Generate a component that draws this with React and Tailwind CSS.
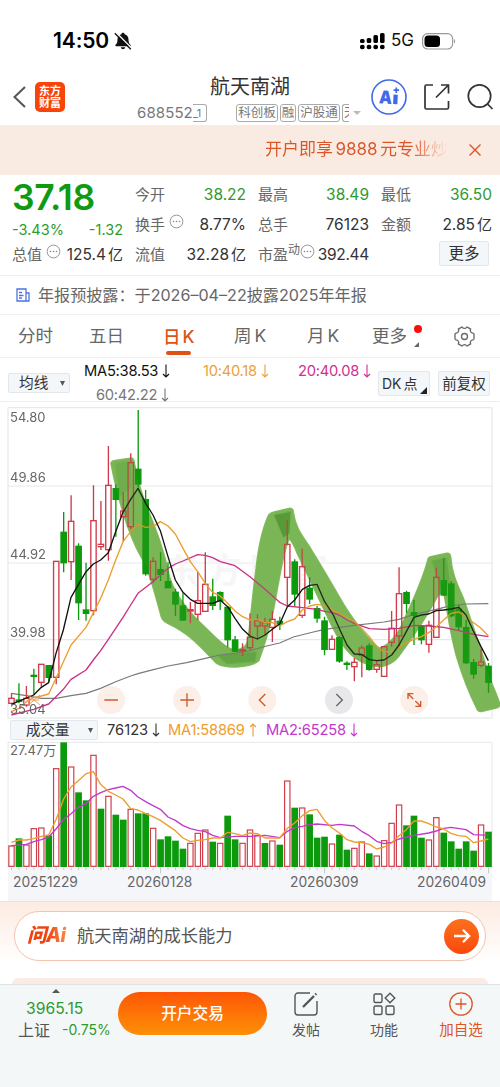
import React from 'react';

// Candles: [direction, high, body top, body bottom, low], in chart units (3 per pixel)
const candles = [
  ['r', 880, 895, 910, 912], ['g', 850, 900, 904, 910], ['r', 858, 895, 915, 920], ['g', 806, 826, 829, 885],
  ['r', 793, 793, 847, 860], ['g', 795, 797, 832, 845], ['r', 484, 484, 832, 853], ['g', 336, 397, 488, 517],
  ['r', 286, 364, 485, 540], ['g', 430, 439, 608, 660], ['g', 488, 630, 640, 662], ['r', 256, 362, 632, 646],
  ['r', 303, 433, 440, 450], ['r', 138, 256, 449, 482], ['g', 253, 266, 298, 410], ['r', 277, 333, 350, 425],
  ['r', 160, 188, 380, 388], ['g', 30, 208, 252, 262], ['g', 270, 299, 521, 527], ['r', 472, 484, 538, 550],
  ['g', 457, 509, 523, 543], ['g', 487, 545, 563, 563], ['g', 566, 577, 612, 648], ['g', 580, 618, 660, 662],
  ['r', 606, 629, 633, 670], ['r', 515, 602, 643, 660], ['r', 457, 553, 634, 634], ['g', 536, 591, 616, 630],
  ['g', 574, 578, 603, 630], ['g', 618, 622, 719, 742], ['g', 708, 720, 754, 757], ['r', 730, 749, 753, 768],
  ['r', 640, 712, 743, 750], ['r', 643, 662, 678, 718], ['r', 653, 668, 678, 706], ['r', 633, 658, 682, 726],
  ['g', 650, 664, 672, 690], ['r', 360, 433, 532, 618], ['g', 478, 486, 582, 618], ['r', 446, 500, 646, 654],
  ['g', 532, 565, 597, 612], ['g', 618, 626, 654, 668], ['g', 650, 663, 748, 766], ['r', 706, 718, 748, 750],
  ['g', 708, 713, 783, 788], ['g', 784, 790, 793, 810], ['r', 774, 787, 800, 844], ['r', 736, 744, 766, 832],
  ['g', 730, 738, 808, 812], ['r', 784, 794, 808, 818], ['r', 738, 740, 829, 830], ['r', 633, 685, 727, 740],
  ['r', 502, 581, 708, 745], ['g', 572, 578, 610, 640], ['g', 600, 638, 646, 735], ['g', 678, 680, 719, 733],
  ['r', 662, 676, 733, 758], ['r', 503, 532, 712, 712], ['g', 474, 542, 585, 588], ['g', 543, 552, 647, 652],
  ['g', 615, 628, 680, 690], ['g', 660, 683, 788, 792], ['g', 777, 788, 822, 836], ['r', 747, 786, 796, 802],
  ['g', 789, 799, 847, 878],
];

const volumes =
  'r409 g387 r406 r357 r355 g378 r177 g99 r172 g249 g273 r137 g298 r260 g316 g331 r299 g312 g312 r356 g390 g381 g394 g418 r401 r371 r361 g397 r401 g319 g390 r401 r361 r377 g401 r394 g406 r214 g295 r295 g315 g385 g382 r403 g376 g421 r416 r397 g432 r439 r393 r341 r286 g348 g319 g385 r391 r324 g370 g396 g418 g396 g424 r346 g367'.split(
    ' '
  );

const ma5 =
  '34,913 101,885 124,862 146,848 168,760 190,690 213,592 258,515 280,492 302,480 325,458 347,395 369,337 392,298 414,265 437,310 459,345 481,392 504,470 526,540 549,577 571,598 593,610 638,610 661,601 683,620 705,655 728,688 750,708 772,717 795,705 817,688 839,672 862,620 884,600 907,568 929,556 951,553 974,605 1000,645 1020,690 1041,735 1063,762 1085,763 1108,779 1130,782 1152,780 1175,765 1197,735 1219,695 1242,652 1264,645 1286,642 1309,632 1331,630 1353,627 1376,622 1398,645 1421,695 1443,740 1465,782';
const ma10 =
  '34,935 57,925 79,905 101,893 124,888 146,882 168,835 213,735 258,682 302,595 325,540 347,480 369,425 392,395 414,373 437,382 459,380 481,365 504,378 526,402 549,445 571,485 593,515 616,550 638,577 661,588 683,610 705,633 728,650 750,660 772,658 795,668 817,668 839,678 862,665 884,657 907,630 929,618 951,613 974,617 996,628 1018,640 1041,652 1063,665 1085,685 1108,710 1130,740 1152,755 1175,755 1197,742 1219,728 1242,718 1264,710 1286,698 1309,680 1331,660 1353,640 1376,636 1398,650 1421,668 1443,685 1465,708';
const ma20 =
  '34,945 101,928 146,912 168,890 190,868 213,838 258,810 280,780 302,752 325,718 347,685 369,652 392,615 414,580 459,545 504,505 526,492 549,483 593,464 616,466 638,473 661,485 705,497 750,530 795,568 839,607 862,618 907,623 951,628 974,634 996,638 1018,645 1041,660 1063,670 1108,686 1152,688 1197,685 1242,676 1286,678 1331,682 1376,692 1421,703 1465,710';
const ma60 =
  '34,880 79,887 124,895 168,895 213,887 258,880 302,865 347,845 392,828 414,821 460,809 504,798 560,788 616,775 660,765 705,760 750,752 800,738 839,729 880,711 940,696 974,688 1063,676 1152,666 1197,658 1242,643 1309,628 1353,617 1398,612 1465,611';
const volMa1 =
  '34,398 57,391 79,391 101,387 124,380 146,376 168,330 190,270 213,232 235,213 258,192 280,186 302,224 325,245 347,256 369,268 392,297 414,301 437,312 459,321 481,332 504,348 526,363 549,385 571,396 593,392 616,390 638,385 661,385 683,368 705,372 728,378 750,370 772,372 795,385 839,385 862,356 884,340 907,318 929,303 951,299 974,333 996,354 1018,370 1041,390 1063,397 1085,399 1108,404 1130,418 1152,412 1175,400 1197,378 1219,360 1242,334 1264,334 1286,342 1309,352 1331,358 1353,371 1376,378 1398,380 1421,399 1443,394 1465,388';
const volMa2 =
  '34,408 79,404 101,396 124,390 146,382 168,358 190,330 213,312 235,293 258,282 280,260 302,249 325,240 347,235 369,230 392,242 414,262 437,276 459,288 481,299 504,322 526,332 549,348 571,357 593,362 616,366 638,377 661,384 705,380 750,380 795,377 839,384 862,365 884,354 907,350 929,345 951,343 996,347 1018,344 1063,349 1085,365 1108,378 1130,395 1152,402 1175,398 1197,388 1242,377 1286,370 1309,364 1331,356 1353,353 1398,360 1421,375 1465,377';

// Outline of the highlighter mark that follows the swings
const marker =
  'M333 190Q335 183 345 182L395 174Q402 176 403 190C412 240 428 290 442 325C468 390 492 450 508 530C525 585 570 640 615 682C650 715 680 750 708 750Q738 746 744 722C752 660 757 590 768 510C775 440 790 380 806 345Q812 338 822 336L870 325Q880 326 880 338C885 380 905 405 925 435C965 500 1000 560 1030 612C1060 660 1100 715 1138 745C1165 738 1195 705 1212 660C1240 600 1268 540 1283 482Q1284 472 1295 470L1340 460Q1351 458 1352 472C1354 520 1375 560 1392 600C1414 665 1444 750 1463 815C1477 860 1490 880 1499 912Q1500 921 1488 924L1445 934Q1434 935 1431 926C1408 880 1388 830 1370 770C1353 710 1343 640 1333 585Q1322 572 1312 590C1280 650 1240 710 1195 770C1170 800 1135 806 1100 792C1050 775 1022 730 997 680C962 610 922 520 892 460Q880 430 868 415C848 455 838 540 820 630C805 700 790 745 776 782C755 802 680 808 650 790C610 752 590 720 540 690C515 672 490 670 484 650C468 590 452 530 435 490C390 420 355 300 333 190Z';

const xAt = (i) => 34.5 + i * 22.36;
const GREEN = '#0c9a0c';
const RED = '#cf3b48';

function Arrow({ up }) {
  return (
    <svg className="inline-block align-[-2px] ml-[4px] w-[8px] h-[14px]" viewBox="0 0 8 14" fill="none" stroke="currentColor" strokeWidth="1.1">
      <path d={up ? 'M4 13.500V1M1 4l3-3 3 3' : 'M4 .5V13M1 10l3 3 3-3'} />
    </svg>
  );
}

function StatusBar() {
  return (
    <div className="h-[75px] flex items-center justify-between pl-[53px] pr-[44px] pt-[7px]">
      <div className="flex items-center gap-[5px]">
        <span className="text-[21px] font-semibold tracking-[-0.1px] text-black">14:50</span>
        <svg className="w-[18px] h-[18px]" viewBox="0 0 18 18">
          <path d="M9 .8c1 0 1.500.6 1.600 1.400 2.700.7 3.900 2.800 3.900 5.300 0 3.200.8 4.200 1.900 5.300.6.7.3 1.500-.6 1.500H2.200c-.9 0-1.200-.8-.6-1.500 1.100-1.100 1.900-2.100 1.900-5.300 0-2.500 1.200-4.600 3.900-5.300C7.500 1.400 8 .8 9 .8zM6.800 15.200h4.400c-.2 1.300-1.100 2-2.200 2s-2-.7-2.200-2z" fill="#111" />
          <path d="m2 .5 16 16" stroke="#fff" strokeWidth="1.500" />
          <path d="m.8 1.200 16 16" stroke="#111" strokeWidth="1.300" />
        </svg>
      </div>
      <div className="flex items-center">
        <svg className="w-[26px] h-[18px]" viewBox="0 0 26 18">
          {[[0, 7], [6.7, 6], [13.4, 3], [20, 1]].map(([x, y]) => (
            <g key={x} fill="#000">
              <rect x={x} y={y} width="4.6" height={11 - y} rx="1.6" />
              <rect x={x} y="12.8" width="4.6" height="4.4" rx="2" />
            </g>
          ))}
        </svg>
        <span className="ml-[5px] text-[17px] text-[#111]">5G</span>
        <svg className="ml-2 w-[34px] h-[17px]" viewBox="0 0 34 17">
          <rect x="0.6" y="0.6" width="30" height="15.4" rx="5" fill="none" stroke="#999" strokeWidth="1.2" />
          <rect x="2.5" y="2.5" width="15.5" height="11.6" rx="3.5" fill="#000" />
          <path d="M32 6v4.5c1.6-.8 1.6-3.7 0-4.5z" fill="#999" />
        </svg>
      </div>
    </div>
  );
}

function Header() {
  return (
    <div className="h-[50px] flex">
      <div className="w-[137px] pl-[13px] flex items-center gap-[9px] pb-[6px]">
        <svg className="w-[13px] h-[22px]" viewBox="0 0 13 22" fill="none" stroke="#555" strokeWidth="2">
          <path d="M12 1 1.500 11 12 21" />
        </svg>
        <div className="w-[30px] h-[30px] rounded-[5px] bg-[#f9430b] text-white text-[11px] leading-[12px] font-bold text-center pt-[3px]">
          东方<br />财富
        </div>
      </div>
      <div className="w-[226px]">
        <div className="h-[26px] pl-[73px] leading-[25px] text-[20px] text-[#333] whitespace-nowrap">航天南湖</div>
        <div className="h-[24px] flex items-center text-[#777] whitespace-nowrap">
          <span className="w-[56px] text-[15px] tracking-[0.1px]">688552</span>
          <span className="w-[14px] h-[18px] rounded-r-[3px] border border-l-0 border-[#aaa] text-[11px] leading-[17px]">_1</span>
          <div className="ml-[29px] flex gap-[2px] text-[12.500px]">
            <span className="h-[18px] w-[42px] rounded-[3px] border border-[#aaa] text-center leading-[16px]">科创板</span>
            <span className="h-[18px] w-[16px] rounded-[3px] border border-[#aaa] leading-[16px] flex justify-center">融</span>
            <span className="h-[18px] w-[42px] rounded-[3px] border border-[#aaa] text-center leading-[16px]">沪股通</span>
            <span className="h-[18px] w-[7px] rounded-l-[3px] border border-r-0 border-[#aaa] leading-[16px] pl-px overflow-hidden">天</span>
          </div>
          <span className="ml-[4px] border-x-[4px] border-x-transparent border-t-[4px] border-t-[#bbb]" />
        </div>
      </div>
      <div className="flex items-center pl-[8px] gap-[17px] pb-[6px]">
        <svg className="w-[36px] h-[36px]" viewBox="0 0 36 36">
          <circle cx="18" cy="18" r="17" fill="none" stroke="#4169e8" strokeWidth="1.600" />
          <text x="8" y="24.500" fontSize="18" fontWeight="900" fill="#4169e8" textLength="13" lengthAdjust="spacingAndGlyphs" transform="rotate(3 14 18)">A</text>
          <path d="m22.500 15.500 4.300.2-.4 9.600-4.300-.2z" fill="#4169e8" />
          <path d="M25.300 8.500v5.400M22.600 11.200H28" stroke="#4169e8" strokeWidth="1.700" />
        </svg>
        <svg className="w-[26px] h-[26px]" viewBox="0 0 26 26" fill="none" stroke="#333" strokeWidth="1.700">
          <path d="M9 1H2.500Q1 1 1 2.500V23.500Q1 25 2.500 25H23Q24.500 25 24.500 23.500V17M17 1h7.500v8.500M24 1.500 12 13.500" />
        </svg>
        <svg className="w-[28px] h-[28px]" viewBox="0 0 28 28" fill="none" stroke="#333" strokeWidth="1.700">
          <circle cx="12.500" cy="13" r="11.200" />
          <path d="m20.500 21 5 5" />
        </svg>
      </div>
    </div>
  );
}

function Dots() {
  return (
    <svg className="w-[15px] h-[15px] shrink-0" viewBox="0 0 15 15">
      <circle cx="7.500" cy="7.500" r="6.400" fill="none" stroke="#999" strokeWidth="1" />
      <g fill="#888">
        <circle cx="4.500" cy="7.500" r="0.800" />
        <circle cx="7.500" cy="7.500" r="0.800" />
        <circle cx="10.500" cy="7.500" r="0.800" />
      </g>
    </svg>
  );
}

function Stat({ label, value, unit, green, sup, dots }) {
  return (
    <div className="h-[30px] flex items-center whitespace-nowrap text-[15px] text-[#666]">
      <span>{label}</span>
      {sup && <span className="text-[12px] -mt-[10px]">{sup}</span>}
      {dots && <span className={sup ? '-mt-[8px]' : 'ml-1 -mt-[8px]'}><Dots /></span>}
      <span className={`ml-auto text-[15.500px] ${sup ? 'tracking-[-0.3px]' : ''} ${green ? 'text-[#2f9a2f]' : 'text-[#333]'}`}>
        {value}
        {unit && <span className="ml-[2px] text-[15px]">{unit}</span>}
      </span>
    </div>
  );
}

function Quote() {
  return (
    <div className="h-[101px] border-b border-[#eee] pl-3 pr-2 pt-[5px] grid grid-cols-4 gap-x-3">
      <div>
        <div className="h-[37px] text-[35.500px] leading-[35px] font-semibold tracking-[-0.3px] text-[#0f9a12]">37.18</div>
        <div className="h-[23px] flex items-center justify-between text-[14.500px] text-[#2f9a2f] pt-[2px]">
          <span>-3.43%</span>
          <span>-1.32</span>
        </div>
        <Stat label="总值" value="125.4" unit="亿" dots />
      </div>
      <div>
        <Stat label="今开" value="38.22" green />
        <Stat label="换手" value="8.77%" dots />
        <Stat label="流值" value="32.28" unit="亿" />
      </div>
      <div>
        <Stat label="最高" value="38.49" green />
        <Stat label="总手" value="76123" />
        <Stat label="市盈" value="392.44" sup="动" dots />
      </div>
      <div>
        <Stat label="最低" value="36.50" green />
        <Stat label="金额" value="2.85" unit="亿" />
        <div className="ml-[58px] mt-[1px] w-[50px] h-[25px] rounded-[2px] border border-[#e3e6ea] bg-[#f4f7f9] text-center text-[15.500px] leading-[24px] text-[#333]">更多</div>
      </div>
    </div>
  );
}

function Tabs() {
  return (
    <div className="h-[43px] border-b border-[#f0f0f0] flex items-center text-[17.500px] text-[#666] pl-[18px] whitespace-nowrap">
      <span className="w-[71px]">分时</span>
      <span className="w-[74px]">五日</span>
      <span className="w-[71px] h-full flex flex-col text-[#dd5316]">
        <span className="leading-[43px] h-[36px] font-medium">日<span className="ml-[2px]">K</span></span>
        <span className="ml-[3px] w-[25px] h-[3.500px] rounded-full bg-[#dd5316]" />
      </span>
      <span className="w-[73px]">周<span className="ml-[3px]">K</span></span>
      <span className="w-[65px]">月<span className="ml-[3px]">K</span></span>
      <span>更多</span>
      <span className="w-[12px] h-full ml-[7px] flex flex-col">
        <span className="mt-[10px] w-[8px] h-[8px] rounded-full bg-[#fb0d0d]" />
        <svg className="mt-[9px] w-[5px] h-[5px]" viewBox="0 0 5 5"><path d="M5 0v5H0z" fill="#666" /></svg>
      </span>
      <svg className="ml-[28px] w-[21px] h-[21px]" viewBox="0 0 21 21" fill="none" stroke="#666" strokeWidth="1.300">
        <path d="M7.600 1.200h.8c.8 1.600 3.400 1.600 4.200 0h.8l3.200 1.900c-.9 1.900.3 3.800 2.400 4 .7 0 .8.300 1 1v4.800c-.2.700-.3 1-1 1-2.100.200-3.300 2.100-2.400 4l-3.200 1.900h-.8c-.8-1.600-3.400-1.600-4.200 0h-.8l-3.200-1.900c.9-1.900-.3-3.800-2.400-4-.7 0-.8-.3-1-1V8.100c.2-.7.3-1 1-1 2.100-.2 3.300-2.100 2.400-4z" />
        <circle cx="10.500" cy="10.500" r="3" />
      </svg>
    </div>
  );
}

function Legend() {
  return (
    <div className="h-[44px] border-b border-[#eee] flex pl-2 text-[14.700px] whitespace-nowrap">
      <div className="mt-[15px] w-[62px] h-[20px] rounded-[2px] border border-[#e3e6ea] bg-[#f4f7f9] flex items-center pl-[10px] pr-[4px] justify-between text-[#333]">
        均线
        <svg className="w-[5px] h-[5px]" viewBox="0 0 5 5"><path d="M0 0h5L2.500 5z" fill="#555" /></svg>
      </div>
      <div className="ml-[14px] w-[294px] tracking-[-0.25px]">
        <div className="h-[27px] leading-[27px] flex">
          <span className="w-[119px] text-[#111]">MA5:38.53<Arrow /></span>
          <span className="w-[95px] text-[#eaa23a]">10:40.18<Arrow /></span>
          <span className="text-[#d2308f]">20:40.08<Arrow /></span>
        </div>
        <div className="pl-[12px] leading-[20px] text-[#777]">60:42.22<Arrow /></div>
      </div>
      <div className="mt-[13px] w-[52px] h-[25px] rounded-[2px] border border-[#e3e6ea] bg-[#f4f7f9] flex items-center pl-[3px] text-[14px] text-[#333]">
        DK<span className="ml-[2px]">点</span>
        <svg className="ml-[2px] mt-[13px] w-[7px] h-[7px]" viewBox="0 0 7 7"><path d="M7 0v7H0z" fill="#222" /></svg>
      </div>
      <div className="ml-[8px] mt-[13px] w-[52px] h-[25px] rounded-[2px] border border-[#e3e6ea] bg-[#f4f7f9] text-center leading-[23px] text-[14.500px] text-[#333]">前复权</div>
    </div>
  );
}

function PriceChart() {
  return (
    <div className="relative h-[316px] pt-[5px]">
      <svg className="w-[500px] h-[311px] overflow-visible" viewBox="0 21 1500 933">
        <g fill="none" stroke="#e6e8eb" strokeWidth="3.500">
          <rect x="24" y="23" width="1452" height="931" />
          <path d="M24 258H1476M24 489H1476M24 719H1476" />
        </g>
        <text x="490" y="548" fontSize="104" fontWeight="700" fill="#f6f6f6" letterSpacing="26">东方财富</text>
        <path className="blur-[1.500px]" d={marker} fill="#85bd60" stroke="#85bd60" strokeWidth="5" />
        <g className="blur-[2px]" fill="#4b9330">
          <path d="M822 345L872 335L868 400L850 412Z" opacity="0.800" />
          <path d="M1295 482L1340 472L1350 550L1320 560Z" opacity="0.400" />
          <path d="M345 190L392 182L395 260L360 290Z" opacity="0.250" />
          <path d="M650 765L770 755L765 785L680 792Z" opacity="0.500" />
        </g>
        <polyline points={ma60} fill="none" stroke="#7a7a7a" strokeWidth="3.500" />
        {candles.map(([dir, high, top, bottom, low], i) => {
          const x = xAt(i);
          const color = dir === 'r' ? RED : GREEN;
          return (
            <g key={i} stroke={color} strokeWidth="4">
              <path d={`M${x} ${high}V${top}M${x} ${bottom}V${low}`} />
              <rect x={x - 8} y={top} width="16" height={bottom - top} fill={dir === 'r' ? 'none' : color} />
            </g>
          );
        })}
        <g fill="none" strokeWidth="4" strokeLinejoin="round">
          <polyline points={ma20} stroke="#cc2f86" />
          <polyline points={ma10} stroke="#ee9c2c" />
          <polyline points={ma5} stroke="#111" />
        </g>
        {/* Second, thin coat of the marker so the lines under it look tinted */}
        <path d={marker} fill="#559a30" opacity="0.200" />

        <g>
          {[333, 561, 787, 1243].map((cx) => (
            <circle key={cx} cx={cx} cy="900" r="42" fill="#fcefe7" />
          ))}
          <circle cx="1017" cy="900" r="42" fill="#e8e8ea" />
        </g>
        <g fill="none" stroke="#cf5a2e" strokeWidth="4">
          <path d="M313 900H354M541 900H582M561 880V920M796 882L778 900L796 918" />
          <path d="M1224 897V881H1240M1224 881L1240 897M1246 903L1262 919M1262 903V919H1246" />
          <path d="M1009 882L1027 900L1009 918" stroke="#666" />
        </g>
        <g fill="none" stroke="#ee9b55" strokeWidth="3">
          <path d="M85 885L120 915M85 915L120 885M90 900H118" />
        </g>
      </svg>
      <span className="absolute left-[10px] top-[7px] text-[13px] leading-[16px] text-[#666]">54.80</span>
      <span className="absolute left-[10px] top-[67px] text-[13px] leading-[16px] text-[#666]">49.86</span>
      <span className="absolute left-[10px] top-[144px] text-[13px] leading-[16px] text-[#666]">44.92</span>
      <span className="absolute left-[10px] top-[222px] text-[13px] leading-[16px] text-[#666]">39.98</span>
      <span className="absolute left-[10px] top-[299px] text-[13px] leading-[16px] text-[#666]">35.04</span>
    </div>
  );
}

function VolumeChart() {
  return (
    <div>
      <div className="h-[24px] flex items-center pl-[10px] text-[14.700px] whitespace-nowrap">
        <div className="w-[88px] h-[20px] rounded-[2px] border border-[#e3e6ea] bg-[#f4f7f9] flex items-center pl-[15px] pr-[4px] justify-between text-[14.500px] text-[#333]">
          成交量
          <svg className="w-[5px] h-[5px]" viewBox="0 0 5 5"><path d="M0 0h5L2.500 5z" fill="#555" /></svg>
        </div>
        <span className="ml-[9px] w-[61px] text-[#333]">76123<Arrow /></span>
        <span className="w-[98px] tracking-[-0.2px] text-[#ee9c2c]">MA1:58869<Arrow up /></span>
        <span className="tracking-[-0.2px] text-[#c338cc]">MA2:65258<Arrow /></span>
      </div>
      <div className="relative h-[125px]">
        <svg className="w-[500px] h-[125px] overflow-visible" viewBox="0 97 1500 375">
          <path d="M24 472V98H1476V472" fill="none" stroke="#e6e8eb" strokeWidth="3" />
          {volumes.map((v, i) => {
            const top = Number(v.slice(1));
            return v[0] === 'r' ? (
              <rect key={i} x={xAt(i) - 8} y={top} width="16" height={470 - top} fill="#fff" stroke={RED} strokeWidth="3.500" />
            ) : (
              <rect key={i} x={xAt(i) - 10} y={top - 1} width="20" height={473 - top} fill={GREEN} />
            );
          })}
          <g fill="none" strokeWidth="4" strokeLinejoin="round">
            <polyline points={volMa2} stroke="#c338cc" />
            <polyline points={volMa1} stroke="#ee9c2c" />
          </g>
        </svg>
        <span className="absolute left-[10px] top-0 text-[13px] leading-[16px] text-[#666]">27.47万</span>
      </div>
      <div className="mx-2 h-[34px] bg-[#f5f6fa] flex flex-col">
        <svg className="w-[484px] h-[7px]" viewBox="24 0 1452 21">
          {volumes.map((_, i) => (
            <path key={i} d={`M${xAt(i)} 2V${[20, 42, 64].includes(i) ? 19 : 9}`} stroke="#b9bdc6" strokeWidth="2.500" />
          ))}
        </svg>
        <div className="flex text-[13.800px] leading-[17px] text-[#666] pl-[5px]">
          <span className="w-[114px]">20251229</span>
          <span className="w-[163px]">20260128</span>
          <span className="w-[127px]">20260309</span>
          <span>20260409</span>
        </div>
      </div>
    </div>
  );
}

function AskBar() {
  return (
    <div className="h-[83px] border-t border-[#f3dfd6] bg-linear-to-b from-[#fcebe2] to-white to-75% px-[14px] pt-[9px] flex flex-col">
      <div className="h-[50px] rounded-full border border-[#f4c3ae] bg-white flex items-center pl-[12px] pr-[6px]">
        <span className="w-[41px] pr-1 text-[19.500px] font-extrabold italic tracking-[-0.5px] bg-linear-to-r from-[#f0420c] from-50% to-[#ff8a4a] bg-clip-text text-transparent whitespace-nowrap">问Ai</span>
        <span className="ml-[9px] text-[17.300px] text-[#555]">航天南湖的成长能力</span>
        <span className="ml-auto w-[35px] h-[35px] rounded-full bg-linear-to-b from-[#fb701c] to-[#f9480b] flex items-center justify-center">
          <svg className="w-[18px] h-[16px]" viewBox="0 0 20 18" fill="none" stroke="#fff" strokeWidth="2.600">
            <path d="M1 9h17M11 2l7 7-7 7" />
          </svg>
        </span>
      </div>
      <div className="mt-[17px] h-[6px] -mx-[2px] rounded-t-[10px] bg-[#fcebe2]" />
    </div>
  );
}

function BottomBar() {
  return (
    <div className="h-[103px] border-t border-[#dfe3e6] bg-[#f4f7f8] flex text-[14px]">
      <div className="w-[118px] pt-[4px]">
        <svg className="ml-[52px] w-[8px] h-[4px]" viewBox="0 0 8 4"><path d="M0 4 4 0l4 4z" fill="#555" /></svg>
        <div className="mt-[6px] ml-[26px] text-[15.700px] leading-[20px] text-[#2f9a2f]">3965.15</div>
        <div className="pl-[18px] flex items-center leading-[22px] whitespace-nowrap">
          <span className="text-[16px] text-[#555]">上证</span>
          <span className="ml-[12px] text-[14px] text-[#2f9a2f]">-0.75%</span>
        </div>
      </div>
      <div className="mt-[7px] w-[149px] h-[43px] rounded-full bg-linear-to-b from-[#fd5406] to-[#fd8f06] text-center text-[15.700px] leading-[43px] font-medium text-white">
        开户交易
      </div>
      <div className="ml-[24px] w-[30px] pt-[7px] flex flex-col items-center text-[#555] whitespace-nowrap">
        <svg className="w-[24px] h-[24px]" viewBox="0 0 24 24" fill="none" stroke="#555" strokeWidth="1.400">
          <path d="M16 1H4a3 3 0 0 0-3 3v16a3 3 0 0 0 3 3h16a3 3 0 0 0 3-3V9" />
          <path d="M9 15 20 4M21.300 2.700l1-1" strokeWidth="2.400" />
        </svg>
        <span className="mt-[3px]">发帖</span>
      </div>
      <div className="ml-[48px] w-[30px] pt-[7px] flex flex-col items-center text-[#555] whitespace-nowrap">
        <svg className="w-[24px] h-[24px]" viewBox="0 0 24 24" fill="none" stroke="#555" strokeWidth="1.400">
          <rect x="2" y="2" width="8" height="8.500" rx="1.500" />
          <rect x="2" y="14" width="8" height="8.500" rx="1.500" />
          <rect x="14" y="14" width="8" height="8.500" rx="1.500" />
          <path d="m18 1.200 4.800 4.800-4.800 4.800L13.200 6z" />
        </svg>
        <span className="mt-[3px]">功能</span>
      </div>
      <div className="ml-[40px] w-[44px] pt-[7px] flex flex-col items-center text-[14.500px] text-[#dc5528] whitespace-nowrap">
        <svg className="w-[24px] h-[24px]" viewBox="0 0 24 24" fill="none" stroke="#dc5528" strokeWidth="1.300">
          <circle cx="12" cy="12" r="11.200" />
          <path d="M6.500 12h11M12 6.500v11" />
        </svg>
        <span className="mt-[3px]">加自选</span>
      </div>
    </div>
  );
}

export default function App() {
  return (
    <div className="w-[500px] h-[1087px] overflow-hidden bg-white font-['Inter','Noto_Sans_CJK_SC',sans-serif]">
      <StatusBar />
      <Header />
      <div className="h-[50px] bg-[#f9ebe2] flex items-center pl-[265px] text-[#dc5528]">
        <div className="w-[183px] whitespace-nowrap text-[17px] bg-linear-to-r from-[#dc5528] from-80% to-[#f9ebe2] bg-clip-text text-transparent">
          开户即享<span className="mx-[2.500px]">9888</span>元专业炒
        </div>
        <svg className="ml-[21px] w-[12px] h-[12px]" viewBox="0 0 12 12" stroke="#dc5528" strokeWidth="1.400">
          <path d="m.5.5 11 11M11.500.5l-11 11" />
        </svg>
      </div>
      <Quote />
      <div className="h-[39px] border-b border-[#f0f0f0] flex items-center pl-[16px] text-[#666] whitespace-nowrap">
        <svg className="w-[14px] h-[14px]" viewBox="0 0 14 14" fill="none" stroke="#4b74e0" strokeWidth="1.300">
          <path d="M1 1h9v12H1zM10 5h3v8h-3M3 4.500h3M3 7.500h4.500M3 10h3" />
        </svg>
        <span className="ml-[8px] text-[16.100px]">年报预披露：于2026–04–22披露2025年年报</span>
      </div>
      <Tabs />
      <Legend />
      <PriceChart />
      <VolumeChart />
      <AskBar />
      <BottomBar />
    </div>
  );
}
